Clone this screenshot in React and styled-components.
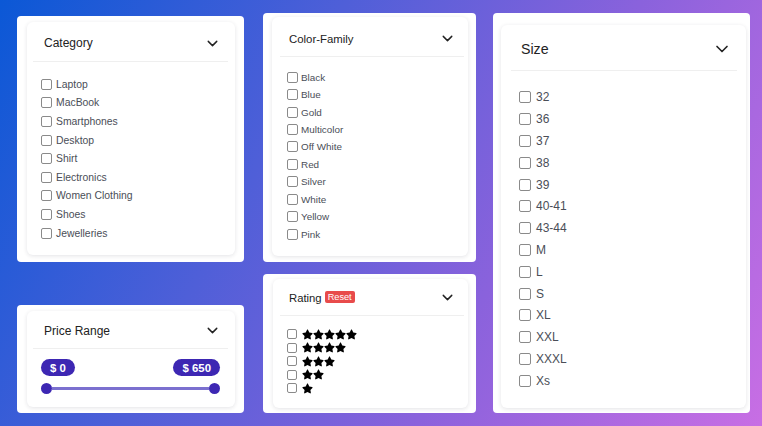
import React from "react";
import styled, { createGlobalStyle } from "styled-components";
import { ChevronDown } from "lucide-react";
import { FaStar } from "react-icons/fa";

const GlobalStyle = createGlobalStyle`
  html, body {
    margin: 0;
    padding: 0;
  }
  body {
    font-family: "Liberation Sans", Arial, sans-serif;
  }
`;

const Page = styled.div`
  box-sizing: border-box;
  width: 762px;
  height: 426px;
  padding: 13px 12px 13px 17px;
  display: flex;
  gap: 19px;
  background: linear-gradient(118deg, #0b58d6 0%, #4f5fd8 35%, #8a62dc 65%, #c86ee4 100%);
  overflow: hidden;
`;

const Column = styled.div`
  width: ${(p) => p.$width}px;
  display: flex;
  flex-direction: column;
  justify-content: space-between;
  margin-right: ${(p) => p.$mr || 0}px;
`;

const Shell = styled.section`
  background: #ffffff;
  border-radius: 4px;
  padding: ${(p) => p.$pad};
  margin-top: ${(p) => p.$mt || 0}px;
  flex: ${(p) => (p.$grow ? 1 : "none")};
  display: flex;
  flex-direction: column;
`;

const Card = styled.div`
  background: #ffffff;
  border-radius: 6px;
  box-shadow: 0 1px 4px rgba(40, 40, 60, 0.13);
  flex: 1;
`;

const Header = styled.div`
  height: ${(p) => p.$h}px;
  margin: ${(p) => p.$margin};
  padding: ${(p) => p.$pad};
  box-sizing: border-box;
  display: flex;
  align-items: center;
  justify-content: space-between;
  border-bottom: 1px solid #efefef;
  color: #222;
  font-size: ${(p) => p.$fs}px;
`;

const TitleWrap = styled.div`
  display: flex;
  align-items: center;
  gap: 3px;
`;

const ResetTag = styled.span`
  background: #e84b4b;
  color: #fff;
  font-size: 9.2px;
  line-height: 12px;
  padding: 0 3px;
  border-radius: 2px;
  margin-top: -1px;
`;

const Chevron = styled(ChevronDown)`
  color: #222;
  flex: none;
`;

const List = styled.ul`
  list-style: none;
  margin: 0;
  padding: ${(p) => p.$pad};
`;

const Row = styled.li`
  height: ${(p) => p.$h}px;
  display: flex;
  align-items: center;
  gap: ${(p) => p.$gap}px;
  color: #4a4e57;
  font-size: ${(p) => p.$fs}px;
`;

const Box = styled.span`
  box-sizing: border-box;
  width: ${(p) => p.$size}px;
  height: ${(p) => p.$size}px;
  border: 1px solid #8a8a8a;
  border-radius: 2px;
  background: #fff;
  flex: none;
`;

const Stars = styled.span`
  display: flex;
  color: #000;
`;

const PriceBody = styled.div`
  padding: 10px 15px 13px 14px;
`;

const Badges = styled.div`
  display: flex;
  justify-content: space-between;
`;

const Badge = styled.span`
  height: 17px;
  padding: 0 ${(p) => p.$px}px;
  border-radius: 9px;
  background: #3d27b3;
  color: #fff;
  font-size: 11.4px;
  font-weight: 700;
  display: flex;
  align-items: center;
`;

const Track = styled.div`
  margin-top: 7px;
  height: 11px;
  display: flex;
  align-items: center;
`;

const Knob = styled.span`
  width: 11px;
  height: 11px;
  border-radius: 50%;
  background: #3d27b3;
  flex: none;
`;

const Line = styled.span`
  flex: 1;
  height: 3px;
  background: #7b70cf;
`;

const category = ["Laptop", "MacBook", "Smartphones", "Desktop", "Shirt", "Electronics", "Women Clothing", "Shoes", "Jewelleries"];
const colors = ["Black", "Blue", "Gold", "Multicolor", "Off White", "Red", "Silver", "White", "Yellow", "Pink"];
const sizes = ["32", "36", "37", "38", "39", "40-41", "43-44", "M", "L", "S", "XL", "XXL", "XXXL", "Xs"];

const CheckList = ({ items, pad, h, gap, fs, box }) => (
  <List $pad={pad}>
    {items.map((it) => (
      <Row key={it} $h={h} $gap={gap} $fs={fs}>
        <Box $size={box} />
        {it}
      </Row>
    ))}
  </List>
);

const App = () => {
  return (
    <>
      <GlobalStyle />
      <Page>
        <Column $width={227}>
          <Shell $pad="6px 9px 7px 10px" $mt={3}>
            <Card>
              <Header $h={40} $fs={12} $margin="0 7px 0 6px" $pad="3px 7px 0 11px">
                Category
                <Chevron size={17} strokeWidth={2} />
              </Header>
              <CheckList items={category} pad="13px 0 13px 14px" h={18.6} gap={4} fs={10.4} box={11} />
            </Card>
          </Shell>
          <Shell $pad="6px 9px 6px 10px">
            <Card>
              <Header $h={38} $fs={12} $margin="0 7px 0 6px" $pad="2px 7px 0 11px">
                Price Range
                <Chevron size={17} strokeWidth={2} />
              </Header>
              <PriceBody>
                <Badges>
                  <Badge $px={9}>$ 0</Badge>
                  <Badge $px={9}>$ 650</Badge>
                </Badges>
                <Track>
                  <Knob />
                  <Line />
                  <Knob />
                </Track>
              </PriceBody>
            </Card>
          </Shell>
        </Column>

        <Column $width={213} $mr={-2}>
          <Shell $pad="4px 8px 6px 9px">
            <Card>
              <Header $h={40} $fs={11.4} $margin="0 4px 0 8px" $pad="4px 8px 0 9px">
                Color-Family
                <Chevron size={17} strokeWidth={2} />
              </Header>
              <CheckList items={colors} pad="11.5px 0 13px 15px" h={17.44} gap={3} fs={9.9} box={11} />
            </Card>
          </Shell>
          <Shell $pad="5px 8px 5px 10px">
            <Card>
              <Header $h={37} $fs={11.3} $margin="0 4px 0 7px" $pad="2px 8px 0 9px">
                <TitleWrap>
                  Rating
                  <ResetTag>Reset</ResetTag>
                </TitleWrap>
                <Chevron size={17} strokeWidth={2} />
              </Header>
              <List $pad="12px 0 13px 14px">
                {[5, 4, 3, 2, 1].map((n) => (
                  <Row key={n} $h={13.5} $gap={5} $fs={10}>
                    <Box $size={10} />
                    <Stars>
                      {Array.from({ length: n }).map((_, i) => (
                        <FaStar key={i} size={11} />
                      ))}
                    </Stars>
                  </Row>
                ))}
              </List>
            </Card>
          </Shell>
        </Column>

        <Column $width={257}>
          <Shell $pad="12px 4px 5px 8px" $grow>
            <Card>
              <Header $h={46} $fs={14.2} $margin="0 9px 0 10px" $pad="3px 5px 0 10px">
                Size
                <Chevron size={20} strokeWidth={2} />
              </Header>
              <CheckList items={sizes} pad="15.5px 0 15px 18px" h={21.8} gap={5} fs={12} box={12} />
            </Card>
          </Shell>
        </Column>
      </Page>
    </>
  );
};

export default App;
